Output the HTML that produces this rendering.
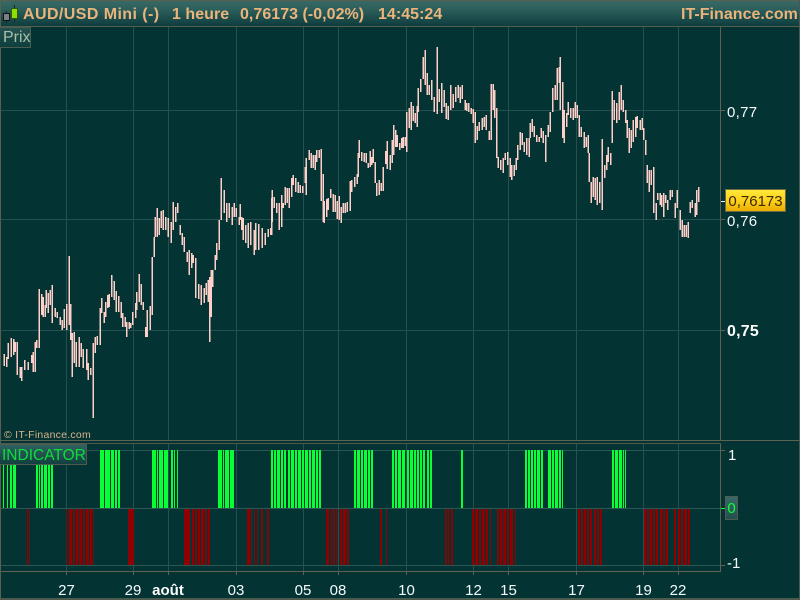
<!DOCTYPE html>
<html><head><meta charset="utf-8"><style>
html,body{margin:0;padding:0;background:#033333}
#a{position:relative;width:800px;height:600px;overflow:hidden;background:#033333;font-family:"Liberation Sans",sans-serif}
svg{position:absolute;left:0;top:0}
.h{position:absolute;top:0;left:0;width:800px;height:26px;background:linear-gradient(#3a6a64,#2f615e 30%,#0e3d3d)}
.t{position:absolute;top:6px;font-size:16px;font-weight:bold;color:#eab47c;white-space:pre;line-height:18px;letter-spacing:.03px}
.l{position:absolute;color:#f4fbff;font-size:15px;line-height:18px;white-space:pre}
.c{transform:translateX(-50%)}
</style></head><body><div id="a">
<div class="h"></div>
<svg width="800" height="600" viewBox="0 0 800 600">
<rect x="0" y="0" width="800" height="1" fill="#5b5f4d"/>
<rect x="0" y="26" width="800" height="1" fill="#565e4e"/>
<path shape-rendering="crispEdges" d="M66.5 27V440M133.5 27V440M168.5 27V440M236.5 27V440M303.5 27V440M338.5 27V440M406.5 27V440M473.5 27V440M508.5 27V440M576.5 27V440M643.5 27V440M678.5 27V440M66.5 444V571M133.5 444V571M168.5 444V571M236.5 444V571M303.5 444V571M338.5 444V571M406.5 444V571M473.5 444V571M508.5 444V571M576.5 444V571M643.5 444V571M678.5 444V571M0 110.5H720M0 219.5H720M0 330.5H720" stroke="#255050" fill="none"/>
<path shape-rendering="crispEdges" d="M4 354V366M6.7 357V367M8 343V359M11 338V357M13.7 339V355M15 342V352M17.3 342V375M20 367V378M21.7 367V381M24.7 360V370M28 362V370M31.7 355V363M33.3 352V372M35 342V372M36.7 340V348M39.3 289V348M41.7 294V315M43.3 297V317M45 305V317M46 290V308M48.3 293V313M50 290V305M52.3 285V323M55 308V317M57.3 312V318M60 317V325M62.3 320V330M64 309V328M66.7 304V330M69.3 256V325M70.7 304V340M72.3 333V377M74 332V363M76.3 342V367M79.3 337V367M81 343V357M83.3 349V368M86.7 349V370M88.3 363V380M90.7 368V375M93.3 343V418M95 337V353M97.3 336V345M100 308V345M101.7 298V313M104.3 312V323M105.7 302V317M107.7 295V308M109.3 294V307M111.7 275V297M114 281V300M116 291V312M118.7 296V312M121 302V318M122.7 313V327M125 317V327M126.7 322V337M129 322V329M130.7 323V328M132.7 312V325M135.7 303V318M136.7 292V310M139.3 274V302M141.3 284V305M143.3 302V310M145.7 327V337M147 310V337M150 306V330M152.3 257V315M154 237V257M155 217V237M157 208V237M159.3 218V235M161.3 211V228M163.3 210V230M165.7 217V230M168.3 218V237M171 222V243M173.3 202V230M175.7 207V222M177.7 203V213M180.3 225V235M182 233V245M184.3 237V252M187.3 252V262M189.3 250V275M191.7 253V268M193.3 255V263M195.7 258V298M198.7 284V299M201.3 285V305M204 288V303M206 283V295M208.3 280V302M209.7 277V342M211.3 270V317M212.7 270V287M215 255V270M216.7 243V260M219 220V250M221.3 178V220M224 190V213M226.7 203V222M229.3 203V218M232 207V225M234.3 203V217M236 208V217M239 217V225M240.3 204V220M241.7 217V230M243.3 218V240M245.7 225V243M248.3 223V248M250.7 222V245M254 230V255M255.7 223V250M258.7 224V250M262 228V248M265 233V245M268.3 229V237M270.7 228V235M271.7 198V235M272.3 190V222M274.3 197V208M276.7 203V213M279.3 203V230M281.7 195V227M283.3 203V208M285 187V205M287.3 188V203M289.3 188V208M291.7 178V197M293.3 175V185M295.7 178V192M298.3 182V193M300 185V193M302.7 186V193M305 167V183M306.3 158V195M309.3 150V160M311 153V168M313 155V168M315 155V170M316.7 150V162M319.3 150V158M321 149V201M323.3 174V222M324.3 201V223M326.7 199V217M328.3 198V210M330.7 189V198M333.3 194V212M335 195V212M337.3 201V219M339 196V220M341 207V223M343.3 203V213M345 203V213M347.3 202V212M350 181V211M351.7 180V192M354.7 177V187M357.3 174V184M358.3 153V177M359.3 140V158M361.7 152V161M364 153V162M366 153V163M368.3 163V168M370 151V167M371.7 157V165M373.3 149V163M375.3 162V183M376.7 183V196M379.3 180V195M381 183V191M383.3 167V191M385.7 151V164M387.3 141V169M390 155V170M392.3 140V163M393.7 125V155M395.7 130V147M397.3 135V147M399.7 143V150M401.7 138V148M403.3 137V148M405 137V146M406.7 112V152M409.3 108V128M411.3 102V130M413.3 106V121M415 113V123M417 106V127M418.3 88V112M420.7 79V92M423.3 57V79M425 50V85M427.3 73V95M429 85V95M431.7 80V100M434.3 97V112M437.3 47V114M439.3 89V102M441.7 83V113M444 90V107M446 103V119M448.3 106V120M450.7 85V110M453 94V108M455.7 87V102M458.3 85V98M460.3 87V103M462.3 85V99M465 100V110M466.7 103V111M468.7 103V112M471 108V114M473.3 109V123M475.3 112V143M477.3 126V140M479.3 122V131M482 118V130M484 117V127M486 115V130M489 131V140M491 84V140M493.3 84V110M494.7 90V118M496.7 108V158M498.3 157V168M500.7 160V170M503.3 158V173M505.3 153V160M507.7 152V165M510 158V177M511.7 165V180M514 165V176M516 158V170M517.7 145V160M520 132V150M522.3 133V145M524.3 142V152M526.7 138V155M529 138V157M530 123V138M532 119V132M534.3 126V137M536.7 135V142M539 137V142M541 128V138M543.3 131V143M545.7 135V162M548.3 125V137M550.3 112V132M552.7 88V112M555 85V100M557 68V100M559 67V83M560.3 57V110M562.7 82V138M564.3 110V143M566.7 113V127M568.3 102V115M570.7 108V118M573 108V120M575 102V118M577.3 105V118M579 115V137M581.3 127V137M584 132V148M586 137V147M588.3 135V153M589 153V182M591 182V203M593.3 177V197M595 178V200M597.3 177V205M599.7 182V203M602.3 139V210M604.7 165V178M606.7 155V170M608.3 147V162M610.7 153V165M612.3 91V143M614.3 100V120M616.7 103V123M619 92V120M621.3 85V110M623.3 100V112M625.7 110V123M627 120V138M629 128V153M631 130V148M633.3 120V142M635.7 117V137M637.3 116V128M640 120V130M642 118V130M643.7 128V140M645.7 140V155M647 165V183M649 170V192M651 170V185M653.7 167V213M656 203V220M657.7 193V200M660 193V205M661.7 195V207M663.7 193V217M665.7 195V203M667.7 200V210M670 190V200M672.3 190V197M675 203V218M677.3 190V208M680 210V230M682 220V237M684 225V237M686 225V237M688 222V238M690 202V213M692 200V208M695 203V217M696.7 190V215M698.7 187V202" stroke="#ffcfc9" stroke-width="1.5" fill="none"/>
<rect x="0" y="440" width="800" height="1" fill="#5d6352"/>
<rect x="0" y="443" width="721" height="1" fill="#4f594d"/>
<path shape-rendering="crispEdges" d="M0 450.5H720M0 508.5H720M0 565.5H720" stroke="#2a5654" fill="none"/>
<path shape-rendering="crispEdges" fill="#0bff35" d="M3 450h1v58h-1zM7 450h1v58h-1zM10 450h2v58h-2zM13 450h3v58h-3zM36 450h2v58h-2zM39 450h1v58h-1zM41 450h2v58h-2zM44 450h3v58h-3zM48 450h2v58h-2zM51 450h2v58h-2zM100 450h4v58h-4zM105 450h2v58h-2zM107 450h3v58h-3zM111 450h3v58h-3zM115 450h2v58h-2zM118 450h2v58h-2zM152 450h4v58h-4zM157 450h1v58h-1zM159 450h4v58h-4zM164 450h4v58h-4zM171 450h2v58h-2zM174 450h1v58h-1zM177 450h1v58h-1zM218 450h4v58h-4zM223 450h1v58h-1zM225 450h4v58h-4zM230 450h4v58h-4zM271 450h2v58h-2zM274 450h2v58h-2zM277 450h3v58h-3zM281 450h2v58h-2zM284 450h2v58h-2zM288 450h2v58h-2zM291 450h3v58h-3zM295 450h2v58h-2zM298 450h3v58h-3zM302 450h2v58h-2zM305 450h3v58h-3zM309 450h2v58h-2zM312 450h3v58h-3zM316 450h2v58h-2zM319 450h2v58h-2zM354 450h2v58h-2zM357 450h3v58h-3zM361 450h2v58h-2zM364 450h3v58h-3zM368 450h2v58h-2zM371 450h2v58h-2zM392 450h2v58h-2zM395 450h2v58h-2zM398 450h3v58h-3zM402 450h3v58h-3zM407 450h2v58h-2zM410 450h3v58h-3zM414 450h2v58h-2zM417 450h2v58h-2zM420 450h2v58h-2zM423 450h2v58h-2zM427 450h2v58h-2zM430 450h2v58h-2zM461 450h2v58h-2zM525 450h2v58h-2zM528 450h2v58h-2zM531 450h2v58h-2zM534 450h2v58h-2zM537 450h3v58h-3zM541 450h2v58h-2zM548 450h3v58h-3zM552 450h2v58h-2zM555 450h3v58h-3zM559 450h2v58h-2zM562 450h1v58h-1zM612 450h2v58h-2zM615 450h3v58h-3zM619 450h3v58h-3zM623 450h1v58h-1zM625 450h1v58h-1z"/>
<path shape-rendering="crispEdges" fill="#8f0000" d="M27 509h1v56h-1zM29 509h1v56h-1zM66 509h1v56h-1zM69 509h3v56h-3zM73 509h2v56h-2zM76 509h2v56h-2zM79 509h3v56h-3zM83 509h2v56h-2zM86 509h3v56h-3zM90 509h2v56h-2zM93 509h1v56h-1zM128 509h4v56h-4zM132 509h2v56h-2zM184 509h3v56h-3zM187 509h3v56h-3zM192 509h2v56h-2zM195 509h2v56h-2zM198 509h2v56h-2zM201 509h3v56h-3zM205 509h2v56h-2zM208 509h2v56h-2zM247 509h3v56h-3zM251 509h1v56h-1zM254 509h1v56h-1zM257 509h1v56h-1zM261 509h2v56h-2zM267 509h2v56h-2zM326 509h3v56h-3zM331 509h1v56h-1zM333 509h2v56h-2zM336 509h1v56h-1zM340 509h2v56h-2zM343 509h3v56h-3zM347 509h2v56h-2zM380 509h2v56h-2zM386 509h1v56h-1zM445 509h2v56h-2zM448 509h1v56h-1zM451 509h2v56h-2zM472 509h2v56h-2zM475 509h3v56h-3zM479 509h2v56h-2zM482 509h3v56h-3zM486 509h2v56h-2zM490 509h1v56h-1zM497 509h2v56h-2zM500 509h2v56h-2zM503 509h3v56h-3zM507 509h2v56h-2zM510 509h3v56h-3zM515 509h1v56h-1zM578 509h2v56h-2zM581 509h2v56h-2zM584 509h2v56h-2zM587 509h2v56h-2zM590 509h2v56h-2zM594 509h2v56h-2zM597 509h2v56h-2zM600 509h2v56h-2zM644 509h2v56h-2zM647 509h2v56h-2zM650 509h2v56h-2zM653 509h2v56h-2zM656 509h2v56h-2zM660 509h2v56h-2zM663 509h2v56h-2zM666 509h2v56h-2zM674 509h2v56h-2zM678 509h2v56h-2zM681 509h2v56h-2zM684 509h3v56h-3zM688 509h2v56h-2z"/>
<path shape-rendering="crispEdges" d="M720.5 27V440M720.5 444V572M0 571.5H721M66.5 572V575M133.5 572V575M168.5 572V575M236.5 572V575M303.5 572V575M338.5 572V575M406.5 572V575M473.5 572V575M508.5 572V575M576.5 572V575M643.5 572V575M678.5 572V575M721 110.5H725M721 219.5H725M721 330.5H725M721 450.5H725M721 565.5H725" stroke="#5d6352" fill="none"/>
<path shape-rendering="crispEdges" d="M721 201.5H725" stroke="#f0f0f0"/>
<path shape-rendering="crispEdges" d="M721 508.5H725" stroke="#0bff35"/>
<rect x="0" y="0" width="1" height="600" fill="#5b5f4d"/>
<rect x="799" y="0" width="1" height="600" fill="#4a5a50"/>
<rect x="0" y="598" width="800" height="2" fill="#4d5a4e"/>
<path shape-rendering="crispEdges" d="M6.5 11V23M14.5 5V22" stroke="#0e2a22"/>
<rect x="3.5" y="13.5" width="6" height="7" fill="#7b8088" stroke="#111" shape-rendering="crispEdges"/>
<rect x="11.5" y="8.5" width="6" height="10" fill="#8fe000" stroke="#2f5a10" shape-rendering="crispEdges"/>
</svg>
<div class="t" style="left:23px;letter-spacing:.42px">AUD/USD Mini (-)</div>
<div class="t" style="left:172px">1 heure</div>
<div class="t" style="left:240px">0,76173 (-0,02%)</div>
<div class="t" style="left:378px">14:45:24</div>
<div class="t" style="left:681px">IT-Finance.com</div>
<div style="position:absolute;left:0;top:27px;width:31px;height:21px;box-sizing:border-box;border:1px solid #4d5c50;border-left:0;background:linear-gradient(#24524f,#0f3f3f);color:#a9c0a8;font-size:16px;line-height:20px;padding-left:3px">Prix</div>
<div style="position:absolute;left:4px;top:428px;font-size:10.5px;line-height:14px;color:#d8b48c;letter-spacing:.25px;white-space:pre">© IT-Finance.com</div>
<div style="position:absolute;left:0;top:444px;width:87px;height:21px;box-sizing:border-box;border:1px solid #4d5c50;border-left:0;background:linear-gradient(#2f6260,#123f3f);color:#0ddf3a;font-size:15.5px;line-height:21px;padding-left:2px">INDICATOR</div>
<div class="l" style="left:727px;top:104px;letter-spacing:.3px">0,77</div>
<div class="l" style="left:727px;top:213px;letter-spacing:.3px">0,76</div>
<div class="l" style="left:727px;top:323px;font-weight:bold;font-size:16px;color:#fff;letter-spacing:.2px">0,75</div>
<div style="position:absolute;left:725px;top:189px;width:61px;height:23px;box-sizing:border-box;border:1px solid #6a6a40;background:linear-gradient(#ffe838,#ffd21e 50%,#e8ac00);color:#3a2a00;font-size:15px;line-height:23px;text-align:center">0,76173</div>
<div class="l" style="left:728px;top:447px">1</div>
<div style="position:absolute;left:725px;top:496px;width:13px;height:24px;box-sizing:border-box;border:1px solid #4d5c50;background:linear-gradient(#3a6a68,#244f4f);color:#0bff35;font-size:15px;line-height:24px;text-align:center">0</div>
<div class="l" style="left:727px;top:555px">-1</div>
<div class="l c" style="left:66.5px;top:582px">27</div>
<div class="l c" style="left:133px;top:582px">29</div>
<div class="l c" style="left:168px;top:582px;font-weight:bold;color:#fff">août</div>
<div class="l c" style="left:236px;top:582px">03</div>
<div class="l c" style="left:303px;top:582px">05</div>
<div class="l c" style="left:338px;top:582px">08</div>
<div class="l c" style="left:406.5px;top:582px">10</div>
<div class="l c" style="left:473.5px;top:582px">12</div>
<div class="l c" style="left:508.5px;top:582px">15</div>
<div class="l c" style="left:576.5px;top:582px">17</div>
<div class="l c" style="left:643.5px;top:582px">19</div>
<div class="l c" style="left:678px;top:582px">22</div>
</div></body></html>
